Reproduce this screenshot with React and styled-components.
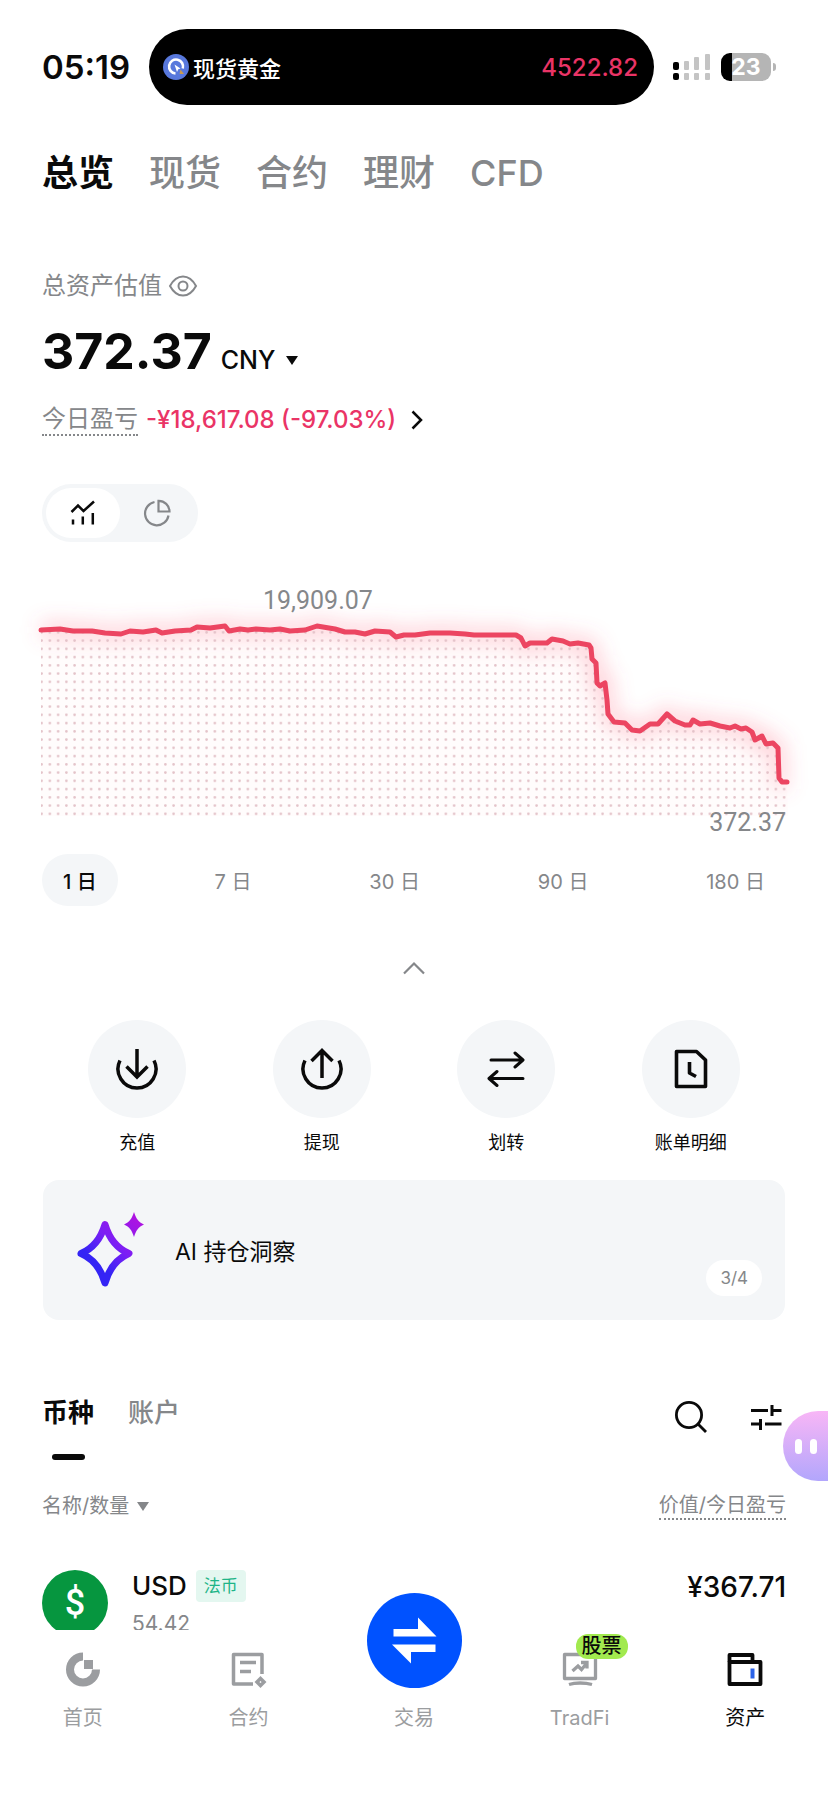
import React, { useState } from 'react';
import styled, { createGlobalStyle } from 'styled-components';

const colorInk = '#0a0a0a';
const colorGrey = '#85878a';
const colorGreyLight = '#9b9da0';
const colorSurface = '#f4f6f8';
const colorDown = '#ea3466';
const colorLine = '#ec4561';
const colorBlue = '#0052ff';

const GlobalStyle = createGlobalStyle`
  *,
  *::before,
  *::after {
    box-sizing: border-box;
  }

  body {
    margin: 0;
    background: #fff;
    color: ${colorInk};
    font-family: Inter, 'Noto Sans CJK SC', sans-serif;
  }

  button {
    padding: 0;
    border: none;
    background: none;
    color: inherit;
    font: inherit;
    cursor: pointer;
  }

  a {
    color: inherit;
    text-decoration: none;
  }

  svg {
    display: block;
    flex-shrink: 0;
  }
`;

const Screen = styled.div`
  display: flex;
  flex-direction: column;
  height: 100vh;
  overflow: hidden;
`;

const Content = styled.main`
  flex: 1;
  min-height: 0;
  overflow: hidden;
`;

/* Status bar */
const StatusBar = styled.header`
  display: flex;
  align-items: center;
  padding: 29px 57px 0 42px;
`;

const Clock = styled.time`
  flex-shrink: 0;
  width: 107px;
  font-size: 33px;
  font-weight: 600;
  line-height: 40px;
`;

const Island = styled.div`
  flex: 1;
  display: flex;
  align-items: center;
  gap: 4px;
  height: 76px;
  padding: 0 16px 0 14px;
  border-radius: 38px;
  background: #000;
  color: #fff;
  font-size: 22px;
  font-weight: 500;
`;

const IslandPrice = styled.span`
  margin-left: auto;
  color: ${colorDown};
  font-size: 24px;
`;

const Signal = styled.svg`
  margin-left: 19px;
`;

const Battery = styled.div`
  position: relative;
  width: 50px;
  height: 28px;
  margin-left: 10px;
  border-radius: 9px;
  background: linear-gradient(90deg, #000 23%, #b5b5b5 23%);
  color: #fff;
  font-size: 23px;
  font-weight: 700;
  line-height: 28px;
  text-align: center;

  &::after {
    content: '';
    position: absolute;
    top: 10px;
    right: -5px;
    width: 3px;
    height: 8px;
    border-radius: 0 4px 4px 0;
    background: #b5b5b5;
  }
`;

/* Account tabs */
const MainTabs = styled.nav`
  display: flex;
  gap: 35px;
  margin-top: 46px;
  padding: 0 42px;
`;

const MainTab = styled.a`
  color: ${({ $active }) => ($active ? colorInk : colorGrey)};
  font-size: 36px;
  font-weight: ${({ $active }) => ($active ? 700 : 500)};
  line-height: 44px;
`;

/* Balance */
const Overview = styled.section`
  margin-top: 75px;
  padding: 0 42px;
`;

const OverviewLabel = styled.div`
  display: flex;
  align-items: center;
  gap: 6px;
  color: ${colorGrey};
  font-size: 24px;
  line-height: 32px;
`;

const Balance = styled.div`
  display: flex;
  align-items: baseline;
  gap: 9px;
  margin-top: 19px;
  line-height: 60px;
`;

const BalanceValue = styled.strong`
  font-size: 50px;
  font-weight: 700;
`;

const Currency = styled.button`
  display: flex;
  align-items: center;
  gap: 11px;
  font-size: 25px;
  font-weight: 500;
`;

const Caret = styled.span`
  border: 6px solid transparent;
  border-top: 9px solid currentColor;
  border-bottom: none;
`;

const Pnl = styled.a`
  display: flex;
  align-items: center;
  gap: 8px;
  margin-top: 13px;
  line-height: 34px;
`;

const PnlLabel = styled.span`
  border-bottom: 2px dotted ${colorGrey};
  color: ${colorGrey};
  font-size: 24px;
  line-height: 30px;
`;

const PnlValue = styled.span`
  margin-right: 7px;
  color: ${colorDown};
  font-size: 24px;
  font-weight: 500;
`;

const ViewToggle = styled.div`
  display: flex;
  width: fit-content;
  margin-top: 47px;
  padding: 4px;
  border-radius: 30px;
  background: ${colorSurface};
`;

const ViewButton = styled.button`
  display: grid;
  place-items: center;
  width: 74px;
  height: 50px;
  border-radius: 25px;
  background: ${({ $active }) => ($active ? '#fff' : 'transparent')};
  color: ${({ $active }) => ($active ? colorInk : colorGrey)};
`;

/* Chart */
const ChartSvg = styled.svg`
  width: 100%;
  margin-top: 26px;
  overflow: visible;

  text {
    fill: ${colorGrey};
    font-family: Roboto, sans-serif;
    font-size: 25px;
  }
`;

const Ranges = styled.div`
  display: flex;
  justify-content: space-between;
  margin-top: 20px;
  padding: 0 42px;
`;

const RangeButton = styled.button`
  height: 52px;
  padding: 0 21px;
  border-radius: 26px;
  background: ${({ $active }) => ($active ? colorSurface : 'transparent')};
  color: ${({ $active }) => ($active ? colorInk : colorGrey)};
  font-size: 20px;
  font-weight: ${({ $active }) => ($active ? 500 : 400)};
`;

const CollapseButton = styled.button`
  display: grid;
  place-items: center;
  width: 80px;
  height: 44px;
  margin: 40px auto 0;
  color: ${colorGrey};
`;

/* Quick actions */
const Actions = styled.div`
  display: grid;
  grid-template-columns: repeat(4, 1fr);
  margin-top: 30px;
  padding: 0 45px;
`;

const Action = styled.button`
  display: flex;
  flex-direction: column;
  align-items: center;
  gap: 12px;
  font-size: 18px;
  line-height: 26px;
`;

const ActionIcon = styled.span`
  display: grid;
  place-items: center;
  width: 98px;
  height: 98px;
  border-radius: 50%;
  background: ${colorSurface};
`;

const InsightCard = styled.a`
  display: flex;
  align-items: center;
  gap: 30px;
  height: 140px;
  margin: 24px 43px 0;
  padding: 0 23px 0 34px;
  border-radius: 16px;
  background: ${colorSurface};
  font-size: 23px;
`;

const PageCount = styled.span`
  align-self: flex-end;
  margin: 0 0 24px auto;
  padding: 0 14px;
  border-radius: 18px;
  background: #fff;
  color: ${colorGrey};
  font-size: 17px;
  line-height: 36px;
`;

/* Assets */
const Assets = styled.section`
  position: relative;
  margin-top: 76px;
  padding: 0 42px;
`;

const AssetsBar = styled.div`
  display: flex;
  align-items: flex-start;
`;

const AssetTab = styled.button`
  display: flex;
  flex-direction: column;
  align-items: center;
  gap: 24px;
  margin-right: 34px;
  color: ${({ $active }) => ($active ? colorInk : colorGrey)};
  font-size: 26px;
  font-weight: ${({ $active }) => ($active ? 700 : 500)};
  line-height: 34px;

  &::after {
    content: '';
    width: 33px;
    height: 6px;
    border-radius: 3px;
    background: ${({ $active }) => ($active ? colorInk : 'transparent')};
  }
`;

const AssetTools = styled.div`
  display: flex;
  align-items: center;
  gap: 42px;
  margin-left: auto;
  padding: 4px 4px 0 0;
`;

const Assistant = styled.button`
  position: absolute;
  top: 15px;
  right: 0;
  display: flex;
  align-items: center;
  gap: 8px;
  width: 45px;
  height: 70px;
  padding-left: 12px;
  border-radius: 35px 0 0 35px;
  background: linear-gradient(#f8b6f6, #b2a6fc);

  &::before,
  &::after {
    content: '';
    width: 7px;
    height: 15px;
    border-radius: 4px;
    background: #fff;
  }
`;

const AssetTable = styled.table`
  width: 100%;
  margin-top: 32px;
  border-collapse: collapse;
`;

const HeadCell = styled.th`
  padding: 0 0 50px;
  color: ${colorGrey};
  font-size: 20px;
  font-weight: 400;
  line-height: 26px;
  text-align: ${({ $align }) => $align || 'left'};
`;

const SortButton = styled.button`
  display: flex;
  align-items: center;
  gap: 8px;
`;

const Dotted = styled.span`
  display: inline-block;
  border-bottom: 2px dotted ${colorGrey};
`;

const AssetCell = styled.td`
  padding: 0;
  vertical-align: top;
  text-align: ${({ $align }) => $align || 'left'};
`;

const Asset = styled.div`
  display: flex;
  gap: 24px;
`;

const Coin = styled.span`
  display: grid;
  place-items: center;
  width: 66px;
  height: 66px;
  border-radius: 50%;
  background: #06963f;
  color: #fff;
  font-family: Roboto, sans-serif;
  font-size: 36px;
  font-weight: 500;
`;

const AssetName = styled.div`
  display: flex;
  align-items: center;
  gap: 9px;
  font-size: 26px;
  font-weight: 500;
  line-height: 32px;
`;

const Tag = styled.span`
  padding: 0 8px;
  border-radius: 4px;
  background: #e4f7f0;
  color: #1fb588;
  font-size: 17px;
  font-weight: 400;
`;

const Amount = styled.div`
  margin-top: 8px;
  color: ${colorGrey};
  font-size: 21px;
  line-height: 28px;
`;

const Worth = styled.span`
  font-size: 28px;
  font-weight: 500;
  line-height: 34px;
`;

/* Bottom navigation */
const BottomNav = styled.nav`
  display: flex;
  flex-shrink: 0;
  height: 171px;
  background: #fff;
`;

const NavItem = styled.a`
  flex: 1;
  display: flex;
  flex-direction: column;
  align-items: center;
  gap: 17px;
  padding-top: 20px;
  color: ${({ $active }) => ($active ? colorInk : colorGreyLight)};
  font-size: 20px;
  line-height: 26px;
`;

const NavIcon = styled.span`
  position: relative;
  width: 38px;
  height: 38px;
`;

const TradeIcon = styled.span`
  position: absolute;
  bottom: 0;
  left: 50%;
  width: 95px;
  height: 95px;
  margin-left: -47px;
  border-radius: 50%;
  background: ${colorBlue};
`;

const NavBadge = styled.span`
  position: absolute;
  top: -16px;
  left: 15px;
  padding: 0 6px;
  border-radius: 12px;
  background: #a2ea4f;
  color: ${colorInk};
  font-size: 20px;
  font-weight: 500;
  line-height: 25px;
  white-space: nowrap;
`;

const line = [
  [41, 630], [60, 629], [73, 631], [92, 631], [105, 633], [121, 634], [130, 631],
  [143, 632], [156, 630], [162, 633], [175, 631], [191, 630], [197, 627], [210, 628],
  [225, 626], [229, 631], [240, 629], [248, 630], [256, 629], [270, 630], [280, 629],
  [290, 631], [305, 630], [317, 626], [335, 629], [345, 632], [355, 632], [365, 634],
  [375, 631], [390, 632], [396, 637], [404, 635], [415, 635], [430, 633], [450, 633],
  [465, 634], [474, 635], [516, 635], [521, 638], [525, 646], [530, 643], [547, 643],
  [552, 639], [563, 641], [570, 644], [578, 643], [589, 645], [591, 648], [592, 659],
  [596, 663], [597, 683], [600, 686], [605, 683], [607, 700], [608, 714], [614, 722],
  [625, 723], [632, 730], [640, 731], [650, 724], [658, 724], [667, 714], [675, 721],
  [685, 725], [690, 725], [693, 720], [700, 724], [710, 723], [720, 726], [730, 728],
  [735, 726], [741, 729], [746, 728], [752, 732], [755, 740], [762, 736], [766, 744],
  [773, 743], [778, 748], [779, 778], [782, 782], [787, 782],
];

const linePoints = line.map((point) => point.join(',')).join(' ');
const areaPoints = `${linePoints} 788,816 41,816`;

const ranges = ['1 日', '7 日', '30 日', '90 日', '180 日'];

function BalanceChart() {
  return (
    <ChartSvg viewBox="0 568 828 266" role="img" aria-label="资产走势">
      <defs>
        <pattern
          id="dots"
          x="37.500"
          y="636.500"
          width="8.250"
          height="8.250"
          patternUnits="userSpaceOnUse"
        >
          <circle cx="4.100" cy="4.100" r="1.300" fill="#e3c2c8" />
        </pattern>
        <filter
          id="glow"
          x="0"
          y="580"
          width="828"
          height="250"
          filterUnits="userSpaceOnUse"
        >
          <feGaussianBlur stdDeviation="10" />
        </filter>
      </defs>
      <polygon points={areaPoints} fill="#fffcfc" />
      <polyline
        points={linePoints}
        fill="none"
        stroke="#ff5c77"
        strokeOpacity="0.300"
        strokeWidth="14"
        filter="url(#glow)"
      />
      <polygon points={areaPoints} fill="url(#dots)" />
      <polyline
        points={linePoints}
        fill="none"
        stroke={colorLine}
        strokeWidth="5"
        strokeLinecap="round"
        strokeLinejoin="round"
      />
      <text x="263" y="609">
        19,909.07
      </text>
      <text x="786" y="831" textAnchor="end">
        372.37
      </text>
    </ChartSvg>
  );
}

export default function App() {
  const [view, setView] = useState('trend');
  const [range, setRange] = useState(ranges[0]);
  const [assetTab, setAssetTab] = useState('coin');

  return (
    <Screen>
      <GlobalStyle />
      <Content>
        <StatusBar>
          <Clock>05:19</Clock>
          <Island>
            <svg width="26" height="26" viewBox="0 0 26 26" fill="none">
              <circle cx="13" cy="13" r="13" fill="#5878dc" />
              <path
                d="M12.5 19.500a7 7 0 1 1 7.300-5"
                stroke="#fff"
                strokeWidth="2.600"
              />
              <path d="m11.500 10.500 6 4-2.200.800L14 18z" fill="#fff" />
              <path d="m17.500 15.500 3.500 4.500h-4.500z" fill="#c99a4e" />
            </svg>
            现货黄金
            <IslandPrice>4522.82</IslandPrice>
          </Island>
          <Signal width="38" height="28" viewBox="0 0 38 28" fill="#c4c4c4">
            <rect x="0" y="9" width="6" height="8" rx="2" fill="#000" />
            <rect x="0" y="20" width="6" height="7" rx="2" fill="#000" />
            <rect x="11" y="8" width="5" height="9" rx="1" />
            <rect x="11" y="20" width="5" height="7" rx="1" />
            <rect x="21" y="4" width="5" height="13" rx="1" />
            <rect x="21" y="20" width="5" height="7" rx="1" />
            <rect x="32" y="1" width="5" height="16" rx="1" />
            <rect x="32" y="20" width="5" height="7" rx="1" />
          </Signal>
          <Battery>23</Battery>
        </StatusBar>

        <MainTabs>
          <MainTab href="#overview" $active>
            总览
          </MainTab>
          <MainTab href="#spot">现货</MainTab>
          <MainTab href="#futures">合约</MainTab>
          <MainTab href="#earn">理财</MainTab>
          <MainTab href="#cfd">CFD</MainTab>
        </MainTabs>

        <Overview>
          <OverviewLabel>
            总资产估值
            <button aria-label="隐藏资产">
              <svg
                width="30"
                height="24"
                viewBox="0 0 30 24"
                fill="none"
                stroke="currentColor"
                strokeWidth="2"
              >
                <path d="M2 12C5.500 5.500 10 2.500 15 2.500S24.500 5.500 28 12c-3.500 6.500-8 9.500-13 9.500S5.500 18.500 2 12z" />
                <circle cx="15" cy="12" r="4.500" />
              </svg>
            </button>
          </OverviewLabel>
          <Balance>
            <BalanceValue>372.37</BalanceValue>
            <Currency>
              CNY
              <Caret />
            </Currency>
          </Balance>
          <Pnl href="#pnl">
            <PnlLabel>今日盈亏</PnlLabel>
            <PnlValue>-¥18,617.08 (-97.03%)</PnlValue>
            <svg
              width="12"
              height="20"
              viewBox="0 0 12 20"
              fill="none"
              stroke={colorInk}
              strokeWidth="2.500"
            >
              <path d="m1.500 1.500 8.500 8.500-8.500 8.500" />
            </svg>
          </Pnl>
          <ViewToggle>
            <ViewButton
              aria-label="走势"
              $active={view === 'trend'}
              onClick={() => setView('trend')}
            >
              <svg
                width="26"
                height="26"
                viewBox="0 0 26 26"
                fill="none"
                stroke="currentColor"
                strokeWidth="2.500"
              >
                <path d="m1.500 12 6.500-6.500L13.500 11 24 1.500" />
                <path d="M3 24.500v-5M12.800 24.500v-8M22.800 24.500V13" />
              </svg>
            </ViewButton>
            <ViewButton
              aria-label="分布"
              $active={view === 'share'}
              onClick={() => setView('share')}
            >
              <svg
                width="28"
                height="28"
                viewBox="0 0 28 28"
                fill="none"
                stroke="currentColor"
                strokeWidth="2.200"
              >
                <path d="M11.500 3A11.800 11.800 0 1 0 25.500 16.500" />
                <path d="M15.500 1.800v10.700h11A10.800 10.800 0 0 0 15.500 1.800z" />
              </svg>
            </ViewButton>
          </ViewToggle>
        </Overview>

        <BalanceChart />

        <Ranges>
          {ranges.map((item) => (
            <RangeButton
              key={item}
              $active={item === range}
              onClick={() => setRange(item)}
            >
              {item}
            </RangeButton>
          ))}
        </Ranges>

        <CollapseButton aria-label="收起">
          <svg
            width="22"
            height="14"
            viewBox="0 0 22 14"
            fill="none"
            stroke="currentColor"
            strokeWidth="2.200"
          >
            <path d="m1 12.500 10-10 10 10" />
          </svg>
        </CollapseButton>

        <Actions>
          <Action>
            <ActionIcon>
              <svg
                width="42"
                height="42"
                viewBox="0 0 42 42"
                fill="none"
                stroke="currentColor"
                strokeWidth="3.500"
              >
                <path d="M4 12.500a19 19 0 1 0 34 0" />
                <path d="M21 1v27M10.500 18.500 21 29l10.500-10.500" />
              </svg>
            </ActionIcon>
            充值
          </Action>
          <Action>
            <ActionIcon>
              <svg
                width="42"
                height="42"
                viewBox="0 0 42 42"
                fill="none"
                stroke="currentColor"
                strokeWidth="3.500"
              >
                <path d="M4 12.500a19 19 0 1 0 34 0" />
                <path d="M21 30V3M10.500 13 21 2.500 31.500 13" />
              </svg>
            </ActionIcon>
            提现
          </Action>
          <Action>
            <ActionIcon>
              <svg
                width="38"
                height="38"
                viewBox="0 0 38 38"
                fill="none"
                stroke="currentColor"
                strokeWidth="3"
                strokeLinecap="round"
                strokeLinejoin="round"
              >
                <path d="M4 10h31M28 3l8 7-8 7" />
                <path d="M36 28.500H3M10 21.500l-8 7 8 7" />
              </svg>
            </ActionIcon>
            划转
          </Action>
          <Action>
            <ActionIcon>
              <svg
                width="34"
                height="40"
                viewBox="0 0 34 40"
                fill="none"
                stroke="currentColor"
                strokeWidth="3.600"
                strokeLinejoin="round"
              >
                <path d="M2.500 2.500h20L31.500 11v26.500h-29z" />
                <path d="M15.500 13v11l6.500 3.500" />
              </svg>
            </ActionIcon>
            账单明细
          </Action>
        </Actions>

        <InsightCard href="#insight">
          <svg width="68" height="76" viewBox="0 0 68 76" fill="none">
            <defs>
              <linearGradient
                id="spark"
                x1="14"
                y1="60"
                x2="62"
                y2="6"
                gradientUnits="userSpaceOnUse"
              >
                <stop offset="0.150" stopColor="#3424f5" />
                <stop offset="0.500" stopColor="#7a1ff5" />
                <stop offset="1" stopColor="#b012e0" />
              </linearGradient>
            </defs>
            <path
              d="M28 12.500C32 26 39 36 52 41.500 39 47 32 57 28 71 24 57 17 47 4 41.500 17 36 24 26 28 12.500z"
              stroke="url(#spark)"
              strokeWidth="7"
              strokeLinejoin="round"
            />
            <path
              d="M57 0c2 6.500 4.500 10 10 12.500-5.500 2.500-8 6-10 12.500-2-6.500-4.500-10-10-12.500 5.500-2.500 8-6 10-12.500z"
              fill="url(#spark)"
            />
          </svg>
          AI 持仓洞察
          <PageCount>3/4</PageCount>
        </InsightCard>

        <Assets>
          <AssetsBar>
            <AssetTab
              $active={assetTab === 'coin'}
              onClick={() => setAssetTab('coin')}
            >
              币种
            </AssetTab>
            <AssetTab
              $active={assetTab === 'account'}
              onClick={() => setAssetTab('account')}
            >
              账户
            </AssetTab>
            <AssetTools>
              <button aria-label="搜索">
                <svg
                  width="34"
                  height="34"
                  viewBox="0 0 34 34"
                  fill="none"
                  stroke="currentColor"
                  strokeWidth="2.800"
                >
                  <circle cx="15" cy="15" r="12.600" />
                  <path d="m23.500 23.500 8.500 8.500" />
                </svg>
              </button>
              <button aria-label="筛选">
                <svg
                  width="32"
                  height="26"
                  viewBox="0 0 32 26"
                  fill="none"
                  stroke="currentColor"
                  strokeWidth="3"
                >
                  <path d="M1 6.500h17M22 1v11M22 6.500h9.500" />
                  <path d="M1 20h9.500M10.500 15v11M15 20h16.500" />
                </svg>
              </button>
            </AssetTools>
          </AssetsBar>
          <Assistant aria-label="助手" />

          <AssetTable>
            <thead>
              <tr>
                <HeadCell>
                  <SortButton>
                    名称/数量
                    <Caret />
                  </SortButton>
                </HeadCell>
                <HeadCell $align="right">
                  <Dotted>价值/今日盈亏</Dotted>
                </HeadCell>
              </tr>
            </thead>
            <tbody>
              <tr>
                <AssetCell>
                  <Asset>
                    <Coin>$</Coin>
                    <div>
                      <AssetName>
                        USD
                        <Tag>法币</Tag>
                      </AssetName>
                      <Amount>54.42</Amount>
                    </div>
                  </Asset>
                </AssetCell>
                <AssetCell $align="right">
                  <Worth>¥367.71</Worth>
                </AssetCell>
              </tr>
            </tbody>
          </AssetTable>
        </Assets>
      </Content>

      <BottomNav>
        <NavItem href="#home">
          <NavIcon>
            <svg width="38" height="38" viewBox="0 0 38 38">
              <path
                d="M19 6.500A13 13 0 1 0 32 19.500"
                fill="none"
                stroke="currentColor"
                strokeWidth="8"
              />
              <path d="M20 10h9v9h-9z" fill="currentColor" />
            </svg>
          </NavIcon>
          首页
        </NavItem>
        <NavItem href="#contract">
          <NavIcon>
            <svg
              width="38"
              height="38"
              viewBox="0 0 38 38"
              fill="none"
              stroke="currentColor"
              strokeWidth="3.500"
            >
              <path d="M33 24V4.500H4.500V34H24" strokeLinejoin="round" />
              <path d="M11 12.500h16M11 21.500h11" />
              <path d="m31.500 28.500 3.500 3.500-3.500 3.500L28 32z" />
            </svg>
          </NavIcon>
          合约
        </NavItem>
        <NavItem href="#trade">
          <NavIcon>
            <TradeIcon>
              <svg width="95" height="95" viewBox="0 0 95 95" fill="#fff">
                <path d="M26.500 36H51V24.500L69.500 43.500h-43z" />
                <path d="M68.500 59H44v11.500L25 51.500h43.500z" />
              </svg>
            </TradeIcon>
          </NavIcon>
          交易
        </NavItem>
        <NavItem href="#tradfi">
          <NavIcon>
            <svg
              width="38"
              height="38"
              viewBox="0 0 38 38"
              fill="none"
              stroke="currentColor"
              strokeWidth="3.300"
            >
              <path d="M3.500 4.500h31v24h-31z" strokeLinejoin="round" />
              <path d="M8 34.500c6-2 16-2 23 0" />
              <path d="m11.500 21 5.500-5 3.500 3.500 5-6M20 12.500h6v6" />
            </svg>
            <NavBadge>股票</NavBadge>
          </NavIcon>
          TradFi
        </NavItem>
        <NavItem href="#assets" $active>
          <NavIcon>
            <svg
              width="38"
              height="38"
              viewBox="0 0 38 38"
              fill="none"
              stroke="currentColor"
              strokeWidth="3.800"
              strokeLinejoin="round"
            >
              <path d="M3.500 12V5h23v6" />
              <path d="M3.500 12h31v22h-31z" />
              <path d="M26.500 18.500v10" stroke="#2a62e8" strokeWidth="4" />
            </svg>
          </NavIcon>
          资产
        </NavItem>
      </BottomNav>
    </Screen>
  );
}
